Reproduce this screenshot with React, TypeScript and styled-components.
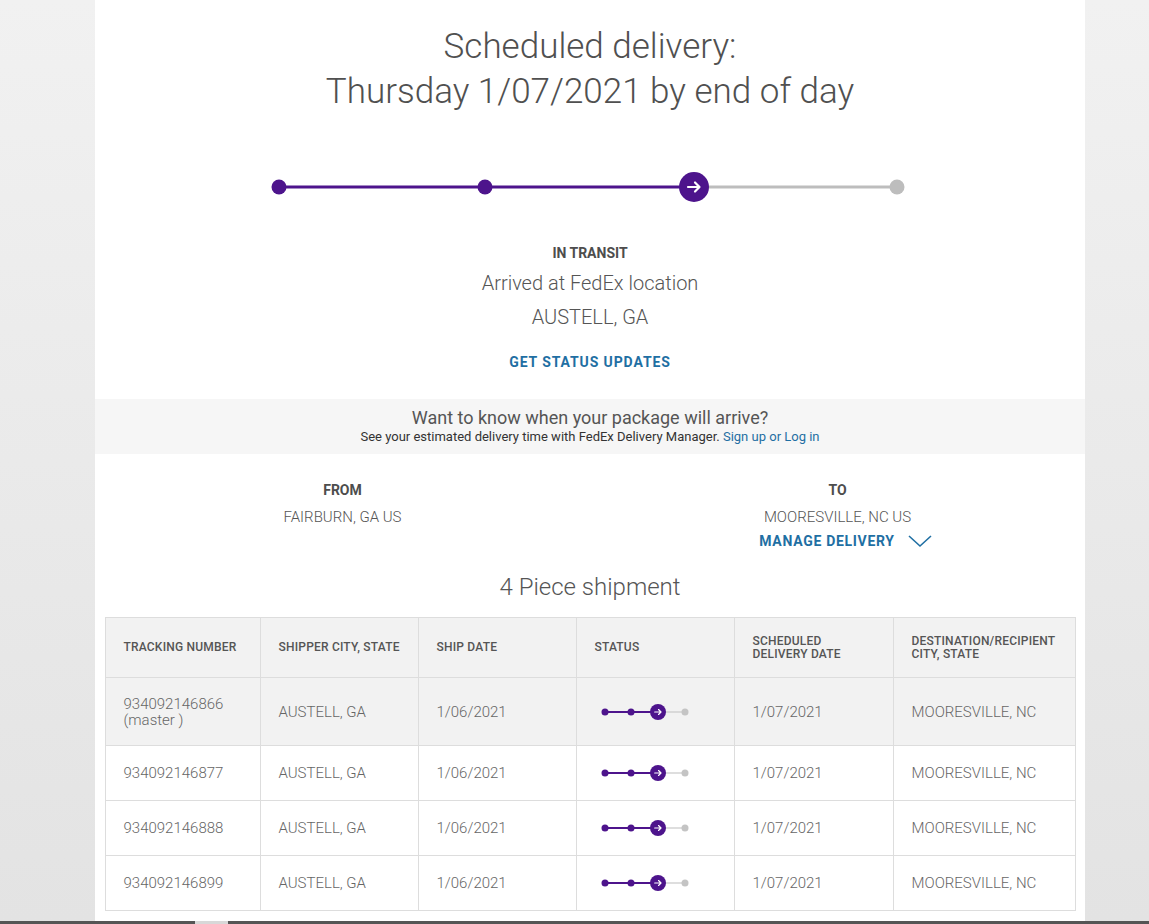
import React from "react";
import styled, { createGlobalStyle } from "styled-components";

const Global = createGlobalStyle`
  html, body { margin: 0; padding: 0; }
  body { font-family: Roboto, "Liberation Sans", sans-serif; overflow: hidden; }
`;

const PURPLE = "#4d148c";
const BLUE = "#1f6fa3";

const Page = styled.div`
  height: 100vh;
  display: grid;
  grid-template-rows: 1fr 3px;
  overflow: hidden;
`;

const Backdrop = styled.div`
  display: flex;
  padding-left: 95px;
  background: linear-gradient(#f1f1f1, #e3e3e3);
  overflow: hidden;
`;

const Panel = styled.main`
  width: 990px;
  flex: none;
  background: #fff;
  display: flex;
  flex-direction: column;
  align-items: center;
  padding-top: 24px;
`;

const Title = styled.h1`
  margin: 0;
  font-weight: 300;
  font-size: 35px;
  line-height: 45px;
  color: #505050;
  text-align: center;
`;

const Tracker = styled.svg`
  display: block;
  margin-top: 57px;
`;

const StatusBlock = styled.section`
  margin-top: 40px;
  display: flex;
  flex-direction: column;
  align-items: center;
  color: #555;
`;

const StatusLabel = styled.div`
  font-size: 14px;
  font-weight: 700;
  line-height: 20px;
  color: #4d4d4d;
`;

const StatusLine = styled.div<{ $gap?: number }>`
  font-size: 20px;
  font-weight: 300;
  line-height: 34px;
  margin-top: ${(p) => p.$gap ?? 0}px;
  color: #555;
`;

const LinkButton = styled.a<{ $spacing?: number }>`
  font-size: 14px;
  font-weight: 700;
  line-height: 20px;
  letter-spacing: ${(p) => p.$spacing ?? 0.9}px;
  color: ${BLUE};
  text-decoration: none;
  cursor: pointer;
  display: inline-flex;
  align-items: center;
  gap: 13px;
`;

const StatusLink = styled(LinkButton)`
  margin-top: 18px;
`;

const Promo = styled.section`
  align-self: stretch;
  margin-top: 27px;
  background: #f6f6f6;
  padding: 8px 0 9px;
  text-align: center;
`;

const PromoTitle = styled.div`
  font-size: 18px;
  line-height: 22px;
  color: #555;
`;

const PromoText = styled.div`
  font-size: 13px;
  line-height: 16px;
  color: #333;
  a { color: ${BLUE}; text-decoration: none; }
`;

const Route = styled.section`
  align-self: stretch;
  display: grid;
  grid-template-columns: 1fr 1fr;
  margin-top: 26px;
`;

const RouteCol = styled.div`
  display: flex;
  flex-direction: column;
  align-items: center;
`;

const RouteLabel = styled.div`
  font-size: 14px;
  font-weight: 700;
  line-height: 20px;
  color: #4d4d4d;
`;

const RouteCity = styled.div`
  font-size: 15px;
  font-weight: 300;
  line-height: 20px;
  margin-top: 7px;
  color: #555;
`;

const ManageLink = styled(LinkButton)`
  margin-top: 4px;
  margin-left: 16px;
`;

const PieceTitle = styled.h2`
  margin: 21px 0 0;
  font-size: 24px;
  font-weight: 300;
  line-height: 30px;
  color: #555;
`;

const Table = styled.table`
  margin-top: 15px;
  width: 970px;
  border-collapse: collapse;
  table-layout: fixed;
`;

const Th = styled.th<{ $w: number }>`
  width: ${(p) => p.$w}px;
  height: 60px;
  padding: 0 8px 0 18px;
  text-align: left;
  font-size: 12px;
  font-weight: 500;
  line-height: 13px;
  letter-spacing: 0.2px;
  white-space: pre-line;
  color: #555;
  background: #f2f2f2;
  border: 1px solid #ddd;
  box-sizing: border-box;
`;

const Tr = styled.tr<{ $first?: boolean }>`
  background: ${(p) => (p.$first ? "#f2f2f2" : "#fff")};
  height: ${(p) => (p.$first ? 68 : 55)}px;
`;

const Td = styled.td`
  padding: 0 8px 0 18px;
  border: 1px solid #ddd;
  font-size: 15px;
  font-weight: 300;
  line-height: 16px;
  color: #666;
  vertical-align: middle;
`;

const ScrollBar = styled.div`
  background: #555;
  display: flex;
  padding-left: 195px;
`;

const ScrollThumb = styled.div`
  width: 33px;
  background: #d8d8d8;
`;

const Arrow = ({ cx, cy, s }: { cx: number; cy: number; s: number }) => (
  <path
    d={`M${cx - 6 * s} ${cy} H${cx + 5 * s} M${cx + 1 * s} ${cy - 4.5 * s} L${cx + 5.5 * s} ${cy} L${cx + 1 * s} ${cy + 4.5 * s}`}
    stroke="#fff"
    strokeWidth={2.2 * s}
    fill="none"
    strokeLinecap="round"
    strokeLinejoin="round"
  />
);

const BigTracker = () => (
  <Tracker width={640} height={32} viewBox="0 0 640 32">
    <line x1={9} y1={16} x2={424} y2={16} stroke={PURPLE} strokeWidth={3} />
    <line x1={424} y1={16} x2={627} y2={16} stroke="#bdbdbd" strokeWidth={3} />
    <circle cx={9} cy={16} r={7.5} fill={PURPLE} />
    <circle cx={215} cy={16} r={7.5} fill={PURPLE} />
    <circle cx={424} cy={16} r={15} fill={PURPLE} />
    <Arrow cx={424} cy={16} s={1} />
    <circle cx={627} cy={16} r={7.5} fill="#bdbdbd" />
  </Tracker>
);

const MiniTracker = () => (
  <svg width={96} height={18} viewBox="0 0 96 18" style={{ display: "block" }}>
    <line x1={10} y1={9} x2={63} y2={9} stroke={PURPLE} strokeWidth={2} />
    <line x1={63} y1={9} x2={90} y2={9} stroke="#c8c8c8" strokeWidth={1.2} />
    <circle cx={10} cy={9} r={3.5} fill={PURPLE} />
    <circle cx={36} cy={9} r={3.5} fill={PURPLE} />
    <circle cx={63} cy={9} r={8} fill={PURPLE} />
    <Arrow cx={63} cy={9} s={0.55} />
    <circle cx={90} cy={9} r={3.5} fill="#c4c4c4" />
  </svg>
);

const Chevron = () => (
  <svg width={24} height={14} viewBox="0 0 24 14">
    <path d="M1 2 L12 12 L23 2" stroke={BLUE} strokeWidth={1.6} fill="none" />
  </svg>
);

const columns = [
  { label: "TRACKING NUMBER", w: 155 },
  { label: "SHIPPER CITY, STATE", w: 158 },
  { label: "SHIP DATE", w: 158 },
  { label: "STATUS", w: 158 },
  { label: "SCHEDULED\nDELIVERY DATE", w: 159 },
  { label: "DESTINATION/RECIPIENT\nCITY, STATE", w: 182 },
];

const pieces = [
  { id: "934092146866", master: true },
  { id: "934092146877" },
  { id: "934092146888" },
  { id: "934092146899" },
];

export default function App() {
  return (
    <Page>
      <Global />
      <Backdrop>
        <Panel>
          <Title>
            Scheduled delivery:
            <br />
            Thursday 1/07/2021 by end of day
          </Title>
          <BigTracker />
          <StatusBlock>
            <StatusLabel>IN TRANSIT</StatusLabel>
            <StatusLine $gap={3}>Arrived at FedEx location</StatusLine>
            <StatusLine>AUSTELL, GA</StatusLine>
            <StatusLink>GET STATUS UPDATES</StatusLink>
          </StatusBlock>
          <Promo>
            <PromoTitle>Want to know when your package will arrive?</PromoTitle>
            <PromoText>
              See your estimated delivery time with FedEx Delivery Manager. <a>Sign up or Log in</a>
            </PromoText>
          </Promo>
          <Route>
            <RouteCol>
              <RouteLabel>FROM</RouteLabel>
              <RouteCity>FAIRBURN, GA US</RouteCity>
            </RouteCol>
            <RouteCol>
              <RouteLabel>TO</RouteLabel>
              <RouteCity>MOORESVILLE, NC US</RouteCity>
              <ManageLink $spacing={0.7}>
                MANAGE DELIVERY <Chevron />
              </ManageLink>
            </RouteCol>
          </Route>
          <PieceTitle>4 Piece shipment</PieceTitle>
          <Table>
            <thead>
              <tr>
                {columns.map((c) => (
                  <Th key={c.label} $w={c.w}>
                    {c.label}
                  </Th>
                ))}
              </tr>
            </thead>
            <tbody>
              {pieces.map((p, i) => (
                <Tr key={p.id} $first={i === 0}>
                  <Td>
                    {p.id}
                    {p.master && (
                      <>
                        <br />
                        (master )
                      </>
                    )}
                  </Td>
                  <Td>AUSTELL, GA</Td>
                  <Td>1/06/2021</Td>
                  <Td>
                    <MiniTracker />
                  </Td>
                  <Td>1/07/2021</Td>
                  <Td>MOORESVILLE, NC</Td>
                </Tr>
              ))}
            </tbody>
          </Table>
        </Panel>
      </Backdrop>
      <ScrollBar>
        <ScrollThumb />
      </ScrollBar>
    </Page>
  );
}
